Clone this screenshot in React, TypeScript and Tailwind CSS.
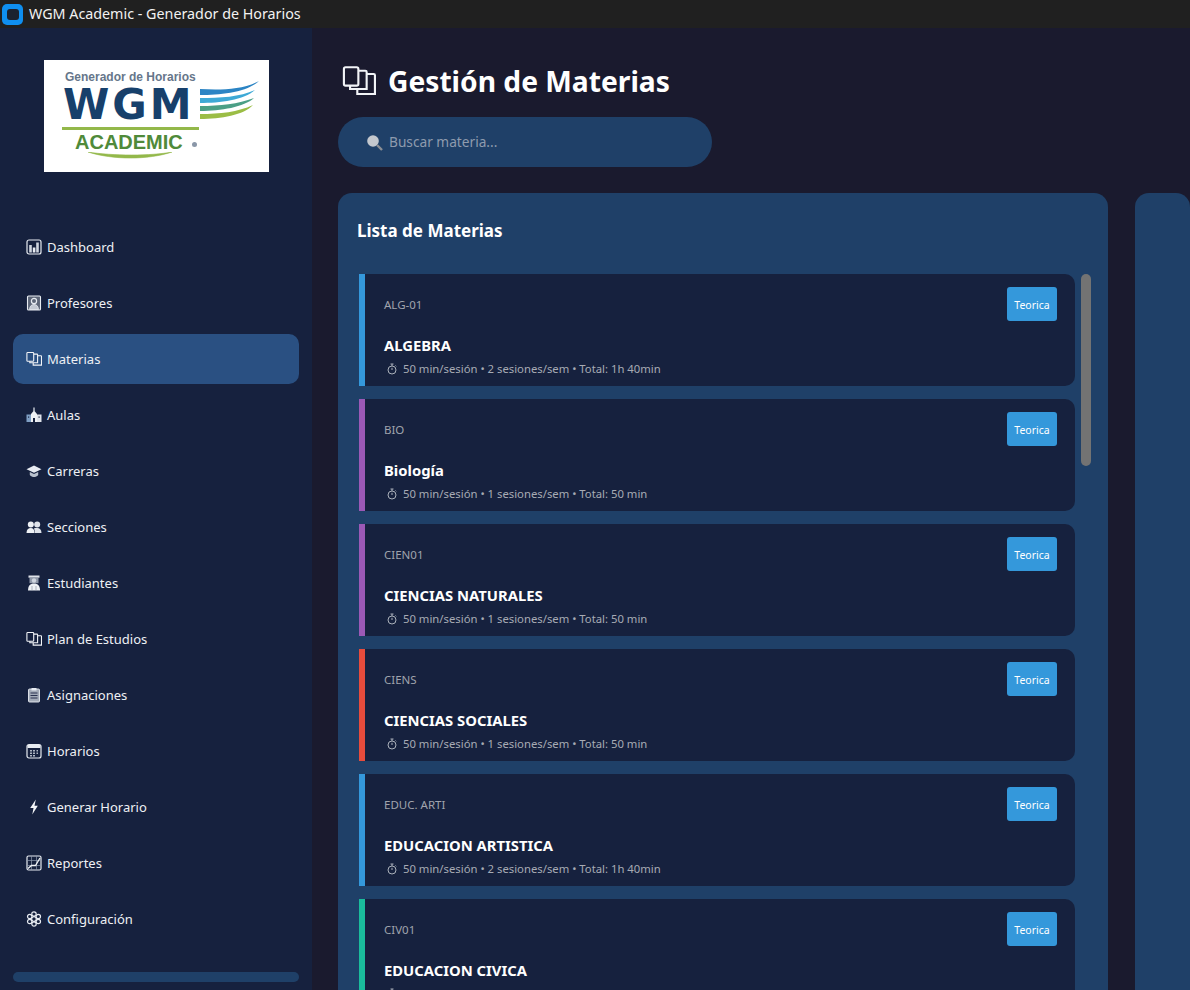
import React from "react";

const S = { fill: "none", stroke: "#e8ecf2", strokeWidth: 1.2 } as const;
const Svg = ({ children, size = 16 }: { children: React.ReactNode; size?: number }) => (
  <svg width={size} height={size} viewBox="0 0 16 16" className="shrink-0">{children}</svg>
);

const Books = ({ size = 16, sw = 1.1 }: { size?: number; sw?: number }) => (
  <svg width={size} height={size} viewBox="0 0 16 16" className="shrink-0" fill="none" stroke="#f2f4f7" strokeWidth={sw}>
    <rect x="0.900" y="1.500" width="6.800" height="8.700" rx="0.800" />
    <path d="M7.700 3.150h3.300a.6.6 0 0 1 .6.6v8h-7.800v-1.500" />
    <path d="M11.600 4.700h3.300a.6.6 0 0 1 .6.6v8.800H7.200v-2.300" />
  </svg>
);

const icons: Record<string, React.ReactNode> = {
  Dashboard: (
    <Svg>
      <rect x="1" y="1" width="14" height="14" rx="2" {...S} />
      <rect x="3.200" y="6" width="2.600" height="7.500" fill="#cfd5df" />
      <rect x="6.800" y="8.500" width="2.600" height="5" fill="#e8ecf2" />
      <rect x="10.200" y="3.500" width="2.600" height="10" fill="#cfd5df" />
    </Svg>
  ),
  Profesores: (
    <Svg>
      <rect x="1.500" y="1" width="13" height="14" rx="1" fill="#5d6678" stroke="#e8ecf2" strokeWidth="1.100" />
      <circle cx="8" cy="6" r="2.600" {...S} />
      <path d="M3.500 14.500c.3-3.500 2-5 4.500-5s4.200 1.500 4.500 5z" fill="#c3c9d3" stroke="#e8ecf2" strokeWidth="0.800" />
    </Svg>
  ),
  Materias: <Books />,
  "Plan de Estudios": <Books />,
  Aulas: (
    <Svg>
      <path d="M8 .5v3.500" {...S} />
      <path d="M5 7 8 3.500 11 7v8H5z" fill="#eef1f5" />
      <rect x="0.500" y="7.500" width="4.500" height="7.500" fill="#7f9fc4" />
      <rect x="11" y="7.500" width="4.500" height="7.500" fill="#dfe3ea" />
      <rect x="7" y="11" width="2" height="4" fill="#16213e" />
      <rect x="2" y="9.500" width="1.200" height="1.200" fill="#16213e" />
      <rect x="12.500" y="9.500" width="1.200" height="1.200" fill="#16213e" />
    </Svg>
  ),
  Carreras: (
    <Svg>
      <path d="M8 2.500 .5 6.200 8 9.800l7.500-3.600z" fill="#e8ecf2" />
      <path d="M3.800 9v3c1.200 1.400 2.800 2 4.200 2s3-.6 4.200-2V9L8 11z" fill="#b9c1cd" />
    </Svg>
  ),
  Secciones: (
    <Svg>
      <circle cx="4.800" cy="5.500" r="3" fill="#eef1f5" />
      <circle cx="11.200" cy="5.500" r="3" fill="#dfe3ea" />
      <path d="M.5 14c0-3.300 1.800-5 4.300-5s3.500 1.500 3.700 5z" fill="#eef1f5" />
      <path d="M8.800 14c0-2.400-.3-3.700-1-4.500.9-.4 2-.5 3.400-.5 2.500 0 4.300 1.700 4.300 5z" fill="#dfe3ea" />
    </Svg>
  ),
  Estudiantes: (
    <Svg>
      <rect x="2.500" y="0.500" width="11" height="2.200" fill="#dfe3ea" />
      <rect x="3.500" y="2.700" width="9" height="5.500" fill="#8f98a8" />
      <circle cx="8" cy="5.500" r="2.200" fill="#cfd5df" />
      <path d="M2 15.500c0-4.500 2-7 6-7s6 2.500 6 7z" fill="#eef1f5" />
      <path d="M6 11v4.500M10 11v4.500" stroke="#8f98a8" strokeWidth="0.700" />
    </Svg>
  ),
  Asignaciones: (
    <Svg>
      <rect x="2.500" y="2" width="11" height="13" rx="1" fill="#a3abb8" stroke="#e8ecf2" strokeWidth="0.900" />
      <rect x="5.500" y="1" width="5" height="2.500" fill="#e8ecf2" />
      <path d="M4.500 6h7M4.500 8.500h7M4.500 11h7" stroke="#2a3350" strokeWidth="1" />
    </Svg>
  ),
  Horarios: (
    <Svg>
      <rect x="1" y="1.500" width="14" height="13.500" rx="2" {...S} />
      <rect x="1.500" y="2" width="13" height="3" fill="#e8ecf2" />
      <path d="M4 7h2v1.500H4zM7 7h2v1.500H7zM10.500 7h1.500v1.500h-1.500zM4 9.500h2V11H4zM7 9.500h2V11H7zM10.500 9.500h1.500V11h-1.500zM4 12h2v1.500H4zM7 12h2v1.500H7z" fill="#aeb5c2" />
    </Svg>
  ),
  "Generar Horario": (
    <Svg>
      <path d="M9.800 .5 4.200 9h3.300L6.300 15.500l5.500-8.800H8.500z" fill="#f2f4f7" />
    </Svg>
  ),
  Reportes: (
    <Svg>
      <rect x="1" y="1" width="14" height="14" rx="1.500" {...S} />
      <path d="M1 5.500h14M1 10.500h14M5.500 1v14M10.500 1v14" stroke="#8f9bb0" strokeWidth="0.700" />
      <path d="M2 13.500 5.500 10.500h4L14 3" fill="none" stroke="#f2f4f7" strokeWidth="1.300" />
    </Svg>
  ),
  "Configuración": (
    <Svg>
      <circle cx="8" cy="8" r="2.300" {...S} />
      <circle cx="8" cy="3" r="2.200" {...S} />
      <circle cx="8" cy="13" r="2.200" {...S} />
      <circle cx="3.700" cy="5.500" r="2.200" {...S} />
      <circle cx="12.300" cy="5.500" r="2.200" {...S} />
      <circle cx="3.700" cy="10.500" r="2.200" {...S} />
      <circle cx="12.300" cy="10.500" r="2.200" {...S} />
    </Svg>
  ),
};

const nav = ["Dashboard", "Profesores", "Materias", "Aulas", "Carreras", "Secciones", "Estudiantes", "Plan de Estudios", "Asignaciones", "Horarios", "Generar Horario", "Reportes", "Configuración"];

const materias = [
  { code: "ALG-01", name: "ALGEBRA", meta: "50 min/sesión • 2 sesiones/sem • Total: 1h 40min", bar: "bg-[#3498db]" },
  { code: "BIO", name: "Biología", meta: "50 min/sesión • 1 sesiones/sem • Total: 50 min", bar: "bg-[#9b59b6]" },
  { code: "CIEN01", name: "CIENCIAS NATURALES", meta: "50 min/sesión • 1 sesiones/sem • Total: 50 min", bar: "bg-[#9b59b6]" },
  { code: "CIENS", name: "CIENCIAS SOCIALES", meta: "50 min/sesión • 1 sesiones/sem • Total: 50 min", bar: "bg-[#e74c3c]" },
  { code: "EDUC. ARTI", name: "EDUCACION ARTISTICA", meta: "50 min/sesión • 2 sesiones/sem • Total: 1h 40min", bar: "bg-[#3498db]" },
  { code: "CIV01", name: "EDUCACION CIVICA", meta: "50 min/sesión • 1 sesiones/sem • Total: 50 min", bar: "bg-[#1abc9c]" },
];

const Logo = () => (
  <div className="flex h-[112px] w-[225px] flex-col overflow-hidden bg-white pl-[18px] pt-[10px]">
    <div className="ml-[3px] h-[14px] whitespace-nowrap text-[12px] font-bold leading-[14px] text-[#66768a] [font-family:'Liberation_Sans',sans-serif]">Generador de Horarios</div>
    <div className="mt-[5px] flex h-[32px] items-start">
      <div className="ml-[1px] h-[32px] w-[137px] whitespace-nowrap text-[42px] font-bold leading-[32px] tracking-[3px] text-[#17406b] [font-family:'DejaVu_Sans',sans-serif]">WGM</div>
      <svg width="60" height="39" viewBox="0 0 60 39" className="-mt-[8px] shrink-0">
        <path d="M0 8c20 1 42 1 59-8-12 11-38 14-59 14z" fill="#2b84c4" />
        <path d="M0 17c20 0 40-1 55-8-11 10-35 13-55 13z" fill="#3ea9d6" />
        <path d="M0 25c20 0 38-2 54-8-10 9-33 13-54 13z" fill="#4b9f86" />
        <path d="M0 33c20 0 38-2 53-9-9 10-32 14-53 14z" fill="#9bbd45" />
      </svg>
    </div>
    <div className="mt-[6px] h-[3px] w-[137px] shrink-0 bg-[#93b84a]" />
    <div className="ml-[13px] mt-[1px] flex h-[22px] shrink-0 items-center whitespace-nowrap text-[20px] font-bold leading-[22px] text-[#4f8a3a] [font-family:'Liberation_Sans',sans-serif]">
      ACADEMIC
      <span className="ml-[9px] mt-[4px] h-[5px] w-[5px] rounded-full bg-[#8a97a8]" />
    </div>
    <svg width="90" height="7" viewBox="0 0 90 7" className="ml-[26px] -mt-[1px] shrink-0">
      <path d="M0 0c25 8 60 8 84 0-20 4-60 4-84 0z" fill="#93b84a" stroke="#93b84a" strokeWidth="0.600" />
    </svg>
  </div>
);

const Stopwatch = () => (
  <svg width="12" height="12" viewBox="0 0 12 12" fill="none" stroke="#aab0bb" strokeWidth="1" className="shrink-0">
    <circle cx="6" cy="7" r="4" />
    <path d="M4.500 1h3M6 1v2M6 7V4.800M9.500 2.500l.8.8" />
  </svg>
);

const Card = ({ m }: { m: (typeof materias)[number] }) => (
  <div className="flex h-[112px] shrink-0 overflow-hidden rounded-r-[10px] bg-[#16213e]">
    <div className={`w-[6px] shrink-0 ${m.bar}`} />
    <div className="flex min-w-0 flex-1 flex-col pl-[19px] pr-[18px] pt-[13px]">
      <div className="flex h-[34px] items-center justify-between">
        <span className="pt-[2px] text-[11.500px] text-[#a0a4ad]">{m.code}</span>
        <span className="flex h-[34px] w-[50px] items-center justify-center rounded-[3px] bg-[#3498db] pt-[3px] text-[10.500px] text-white">Teorica</span>
      </div>
      <div className="mt-[14px] text-[14.800px] font-bold leading-[20px] text-white">{m.name}</div>
      <div className="ml-[2px] mt-[6px] flex items-center gap-[5px] text-[11.300px] leading-[16px] text-[#a7abb4]">
        <Stopwatch />
        <span>{m.meta}</span>
      </div>
    </div>
  </div>
);

export default function App() {
  return (
    <div className="flex h-[990px] w-[1190px] flex-col overflow-hidden bg-[#1a1a2e] text-white [font-family:'Noto_Sans','Open_Sans',sans-serif]">
      <header className="flex h-[28px] shrink-0 items-center bg-[#202020] pl-[2px]">
        <svg width="21" height="21" viewBox="0 0 21 21">
          <rect x="0" y="0" width="21" height="21" rx="5" fill="#0f8ff0" />
          <rect x="5" y="5" width="12" height="11" rx="3" fill="#1b2230" />
        </svg>
        <span className="ml-[6px] text-[14.300px] text-[#f2f2f2]">WGM Academic - Generador de Horarios</span>
      </header>

      <div className="flex min-h-0 flex-1">
        <aside className="flex w-[312px] shrink-0 flex-col bg-[#16213e] pl-[13px] pr-[13px]">
          <div className="ml-[31px] mt-[32px]"><Logo /></div>
          <nav className="mt-[50px] flex flex-col gap-[6px]">
            {nav.map((n) => (
              <div key={n} className={`flex h-[50px] items-center gap-[5px] rounded-[10px] pl-[13px] text-[13px] ${n === "Materias" ? "bg-[#2a5082]" : ""}`}>
                {icons[n]}
                <span className="pt-[2px] text-[#eef0f4]">{n}</span>
              </div>
            ))}
          </nav>
          <div className="mt-auto mb-[8px] h-[10px] w-[286px] rounded-[5px] bg-[#1f4068]" />
        </aside>

        <main className="flex min-w-0 flex-1 flex-col pl-[26px]">
          <div className="ml-[4px] mt-[34px] flex h-[38px] items-center gap-[12px]">
            <Books size={34} sw={1} />
            <h1 className="text-[28.200px] font-bold leading-[38px] text-white">Gestión de Materias</h1>
          </div>
          <div className="mt-[17px] flex h-[50px] w-[374px] items-center gap-[6px] rounded-full bg-[#1f4068] pl-[28px]">
            <svg width="17" height="17" viewBox="0 0 17 17" className="shrink-0">
              <circle cx="7" cy="7" r="5.800" fill="#c4c8ce" />
              <path d="M11 11 16 16" stroke="#8c8f95" strokeWidth="2.400" />
            </svg>
            <span className="pt-[1px] text-[13.700px] text-[#8e9bae]">Buscar materia...</span>
          </div>

          <div className="mt-[26px] flex min-h-0 flex-1 gap-[27px]">
            <section className="flex w-[770px] shrink-0 flex-col rounded-t-[14px] bg-[#1f4068] pl-[21px] pr-[17px]">
              <h2 className="ml-[-2px] mt-[25px] h-[26px] text-[17px] font-bold leading-[26px] text-white">Lista de Materias</h2>
              <div className="mt-[30px] flex min-h-0 flex-1 gap-[6px]">
                <div className="flex min-h-0 w-[716px] flex-col gap-[13px] overflow-hidden">
                  {materias.map((m) => <Card key={m.code} m={m} />)}
                </div>
                <div className="h-[192px] w-[10px] rounded-[5px] bg-[#737373]" />
              </div>
            </section>
            <section className="flex-1 rounded-t-[14px] bg-[#1f4068]" />
          </div>
        </main>
      </div>
    </div>
  );
}
